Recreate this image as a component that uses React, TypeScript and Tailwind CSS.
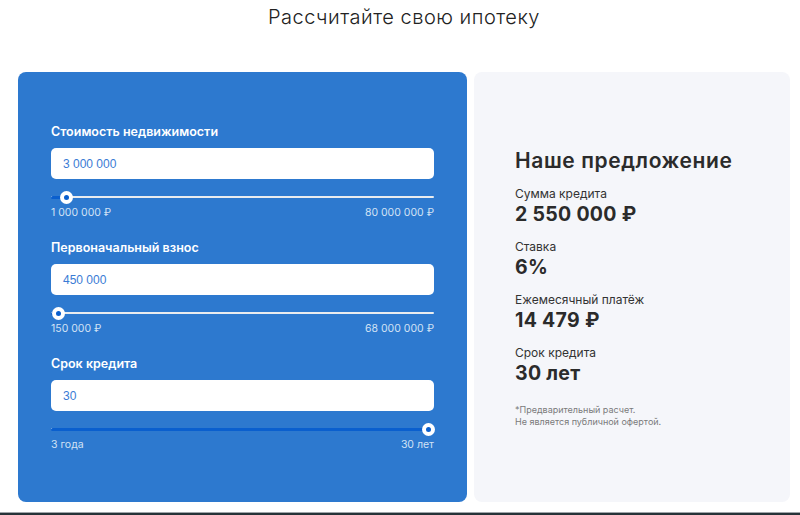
import React from 'react';

type Field = {
  label: string;
  value: string;
  min: number;
  max: number;
  current: number;
  minLabel: string;
  maxLabel: string;
};

const fields: Field[] = [
  { label: 'Стоимость недвижимости', value: '3 000 000', min: 1000000, max: 80000000, current: 3000000, minLabel: '1 000 000 ₽', maxLabel: '80 000 000 ₽' },
  { label: 'Первоначальный взнос', value: '450 000', min: 150000, max: 68000000, current: 450000, minLabel: '150 000 ₽', maxLabel: '68 000 000 ₽' },
  { label: 'Срок кредита', value: '30', min: 3, max: 30, current: 30, minLabel: '3 года', maxLabel: '30 лет' },
];

const offer = [
  { label: 'Сумма кредита', value: '2 550 000 ₽' },
  { label: 'Ставка', value: '6%' },
  { label: 'Ежемесячный платёж', value: '14 479 ₽' },
  { label: 'Срок кредита', value: '30 лет' },
];

const Slider: React.FC<{ min: number; max: number; current: number }> = ({ min, max, current }) => {
  const p = (current - min) / (max - min);
  const pos = `calc(6px + ${p} * (100% - 12px))`;
  return (
    <div className="relative h-[12px] mt-3">
      <div className="absolute left-0 right-0 top-[5px] h-[2px] bg-[#e9ecef] rounded" />
      <div className="absolute left-0 top-[5px] h-[3px] bg-[#0a5fce] rounded" style={{ width: pos }} />
      <div
        className="absolute -top-[0.5px] w-[13px] h-[13px] -ml-[6.5px] rounded-full bg-white flex items-center justify-center"
        style={{ left: pos }}
      >
        <div className="w-[5px] h-[5px] rounded-full bg-[#0a5fce]" />
      </div>
    </div>
  );
};

export default function App() {
  return (
    <div className="h-[515px] w-[800px] bg-white flex flex-col font-['Inter','Noto_Sans',sans-serif] overflow-hidden">
      <h1 className="text-center text-[20px] leading-6 font-light tracking-[0.5px] text-[#222] pt-[5px] pl-[8px]">
        Рассчитайте свою ипотеку
      </h1>

      <div className="flex gap-[7px] mt-[43px] ml-[18px] mr-[10px] h-[430px]">
        {/* left: calculator */}
        <div className="w-[449px] bg-[#2d79cf] rounded-lg flex flex-col justify-center px-[33px] pt-[2px] gap-5">
          {fields.map((f) => (
            <div key={f.label}>
              <div className="text-[12.5px] leading-4 font-semibold text-white">{f.label}</div>
              <div className="mt-2 h-[31px] bg-white rounded-[5px] flex items-center px-3 font-['Liberation_Sans',Arial,sans-serif] text-[12px] text-[#3a7bd5]">
                {f.value}
              </div>
              <Slider min={f.min} max={f.max} current={f.current} />
              <div className="mt-[3px] flex justify-between text-[10.5px] leading-[14px] text-[#d2e2f5]">
                <span>{f.minLabel}</span>
                <span>{f.maxLabel}</span>
              </div>
            </div>
          ))}
        </div>

        {/* right: offer */}
        <div className="flex-1 bg-[#f5f6fa] rounded-lg flex flex-col justify-center pl-[41px] pt-[2px]">
          <div className="text-[21px] leading-6 font-semibold tracking-[0.6px] text-[#2b2b2b]">Наше предложение</div>
          <div className="mt-3 flex flex-col gap-3">
            {offer.map((o) => (
              <div key={o.label}>
                <div className="text-[12px] leading-[17px] text-[#333]">{o.label}</div>
                <div className="text-[19.5px] leading-6 font-bold tracking-[0.3px] text-[#2b2b2b]">{o.value}</div>
              </div>
            ))}
          </div>
          <div className="mt-[19px] text-[9px] leading-3 text-[#7a7a7a]">
            <div>*Предварительный расчет.</div>
            <div>Не является публичной офертой.</div>
          </div>
        </div>
      </div>

      <div className="mt-auto h-[3px] border-t border-[#a0a5aa] bg-[#263238]" />
    </div>
  );
}
